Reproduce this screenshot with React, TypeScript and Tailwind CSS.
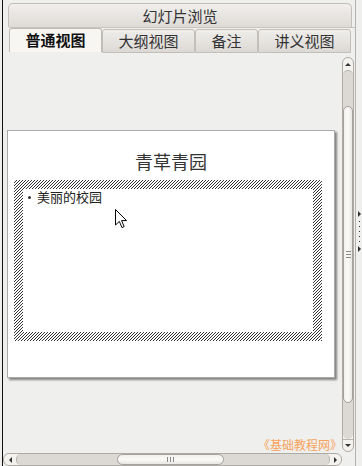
import React from "react";

const font = { fontFamily: '"Noto Sans CJK SC", "Noto Sans", sans-serif' };

function Tri({ dir }: { dir: "up" | "down" | "left" | "right" }) {
  if (dir === "up")
    return <div className="w-0 h-0 border-x-[3px] border-x-transparent border-b-[3px] border-b-[#333]" />;
  if (dir === "down")
    return <div className="w-0 h-0 border-x-[3px] border-x-transparent border-t-[3px] border-t-[#333]" />;
  if (dir === "left")
    return <div className="w-0 h-0 border-y-[3px] border-y-transparent border-r-[3px] border-r-[#333]" />;
  return <div className="w-0 h-0 border-y-[3px] border-y-transparent border-l-[3px] border-l-[#333]" />;
}

function VScroll() {
  return (
    <div className="w-[12px] mt-[5px] mb-[1px] mr-[1px] flex flex-col rounded-[6px] border border-[#aeaba7] bg-[#f4f2ef] overflow-hidden">
      <div className="h-[12px] flex items-center justify-center shrink-0">
        <Tri dir="up" />
      </div>
      <div className="flex-1 flex flex-col rounded-[5px] bg-[#dcd8d4] border-t border-[#b9b6b2]">
        <div className="h-[35px] shrink-0" />
        <div className="h-[297px] shrink-0 rounded-[6px] border border-[#a3a09d] bg-gradient-to-r from-[#f2f0ed] via-[#fbfaf8] to-[#e9e6e3] flex flex-col items-center justify-center gap-[2px]">
          <div className="w-[5px] h-px bg-[#888]" />
          <div className="w-[5px] h-px bg-[#888]" />
          <div className="w-[5px] h-px bg-[#888]" />
        </div>
        <div className="flex-1" />
      </div>
      <div className="h-[12px] flex items-center justify-center shrink-0 border-t border-[#b9b6b2]">
        <Tri dir="down" />
      </div>
    </div>
  );
}

function HScroll() {
  return (
    <div className="h-[13px] w-[339px] flex rounded-[6px] border border-[#aeaba7] bg-[#f4f2ef] overflow-hidden">
      <div className="w-[12px] flex items-center justify-center shrink-0">
        <Tri dir="left" />
      </div>
      <div className="flex-1 flex rounded-[5px] bg-[#dcd8d4] border-x border-[#b9b6b2]">
        <div className="w-[100px] shrink-0" />
        <div className="w-[107px] shrink-0 rounded-[6px] border border-[#a3a09d] bg-gradient-to-b from-[#f2f0ed] via-[#fbfaf8] to-[#e9e6e3] flex items-center justify-center gap-[2px]">
          <div className="h-[5px] w-px bg-[#888]" />
          <div className="h-[5px] w-px bg-[#888]" />
          <div className="h-[5px] w-px bg-[#888]" />
        </div>
        <div className="flex-1" />
      </div>
      <div className="w-[11px] flex items-center justify-center shrink-0">
        <Tri dir="right" />
      </div>
    </div>
  );
}

function Cursor() {
  return (
    <svg width="13" height="20" viewBox="0 0 13 20" className="absolute left-[107px] top-[78px]">
      <path d="M0.5 0.5 L0.5 16 L4.3 12.4 L7 18.6 L9.2 17.6 L6.6 11.6 L11.6 11.6 Z" fill="#fff" stroke="#000" strokeWidth="1" strokeLinejoin="miter" />
    </svg>
  );
}

function Hatch() {
  return (
    <svg className="absolute inset-0" width="308" height="161" shapeRendering="crispEdges">
      <defs>
        <pattern id="hatch" width="3" height="3" patternUnits="userSpaceOnUse">
          <rect width="3" height="3" fill="#fff" />
          <rect x="2" y="0" width="1" height="1" fill="#333" />
          <rect x="1" y="1" width="1" height="1" fill="#333" />
          <rect x="0" y="2" width="1" height="1" fill="#333" />
        </pattern>
      </defs>
      <rect width="308" height="161" fill="url(#hatch)" />
    </svg>
  );
}

export default function App() {
  const tabs = [
    { label: "普通视图", w: "w-[93px]", active: true },
    { label: "大纲视图", w: "w-[93px]", active: false },
    { label: "备注", w: "w-[63px]", active: false },
    { label: "讲义视图", w: "w-[93px]", active: false },
  ];
  return (
    <div className="w-[362px] h-[466px] flex bg-[#eff0ed] overflow-hidden text-[#333]" style={font}>
      <div className="w-[2px] shrink-0" />
      <div className="w-px shrink-0 bg-[#111]" />
      <div className="w-[352px] shrink-0 flex flex-col">
        {/* title bar */}
        <div className="ml-[5px] mt-[3px] w-[344px] h-[24px] rounded-t-[5px] border border-b-0 border-[#c2bfbb] bg-gradient-to-b from-[#f1efec] to-[#dedbd7] flex items-center justify-center text-[15px] leading-none text-[#333]">
          幻灯片浏览
        </div>
        {/* tabs */}
        <div className="ml-[6px] h-[25px] flex border-t border-[#c8c5c1]">
          {tabs.map((t) => (
            <div
              key={t.label}
              className={
                t.active
                  ? "w-[93px] h-full rounded-t-[3px] border border-b-0 border-[#bdbab6] bg-[#f8f6f3] flex items-center justify-center text-[15px] font-bold text-[#111]"
                  : t.w + " h-full mt-px rounded-t-[3px] border border-[#c2bfbb] bg-gradient-to-b from-[#efedea] to-[#dcd9d5] flex items-center justify-center text-[15px] text-[#333]"
              }
            >
              {t.label}
            </div>
          ))}
        </div>
        {/* content */}
        <div className="flex-1 flex min-h-0">
          <div className="w-[339px] relative">
            <div className="ml-[4px] mt-[78px] w-[328px] h-[248px] bg-white border border-[#a9a9a9] shadow-[2px_2px_2px_rgba(0,0,0,0.45)] flex flex-col relative">
              <div className="pt-[19px] h-[42px] text-center text-[18px] leading-[22px] text-[#333]">青草青园</div>
              <div className="ml-[6px] mt-[7px] w-[308px] h-[161px] p-[9px] relative">
                <Hatch />
                <div className="relative w-full h-full bg-white flex items-start">
                  <div className="pl-[5px] text-[13px] leading-[16px] text-[#222] flex items-center">
                    <div className="w-[3px] h-[3px] rounded-full bg-[#333] mr-[6px]" />
                    <span>美丽的校园</span>
                  </div>
                </div>
              </div>
              <Cursor />
            </div>
            <div className="absolute right-0 bottom-[2px] text-[12px] leading-none text-[#f6a25c]">《基础教程网》</div>
          </div>
          <VScroll />
        </div>
        <HScroll />
      </div>
      <div className="w-px shrink-0 bg-[#b5b3af]" />
      <div className="w-[6px] shrink-0 flex flex-col items-center justify-center gap-[2px] -mt-[4px]">
        <Tri dir="right" />
        <div className="w-px h-px bg-[#333] mt-[2px]" />
        <div className="w-px h-px bg-[#333] mt-[2px]" />
        <div className="w-px h-px bg-[#333] mt-[2px]" />
        <div className="w-px h-px bg-[#333] mt-[2px]" />
        <div className="w-px h-px bg-[#333] mt-[2px]" />
        <div className="mt-[2px]"><Tri dir="right" /></div>
      </div>
    </div>
  );
}
